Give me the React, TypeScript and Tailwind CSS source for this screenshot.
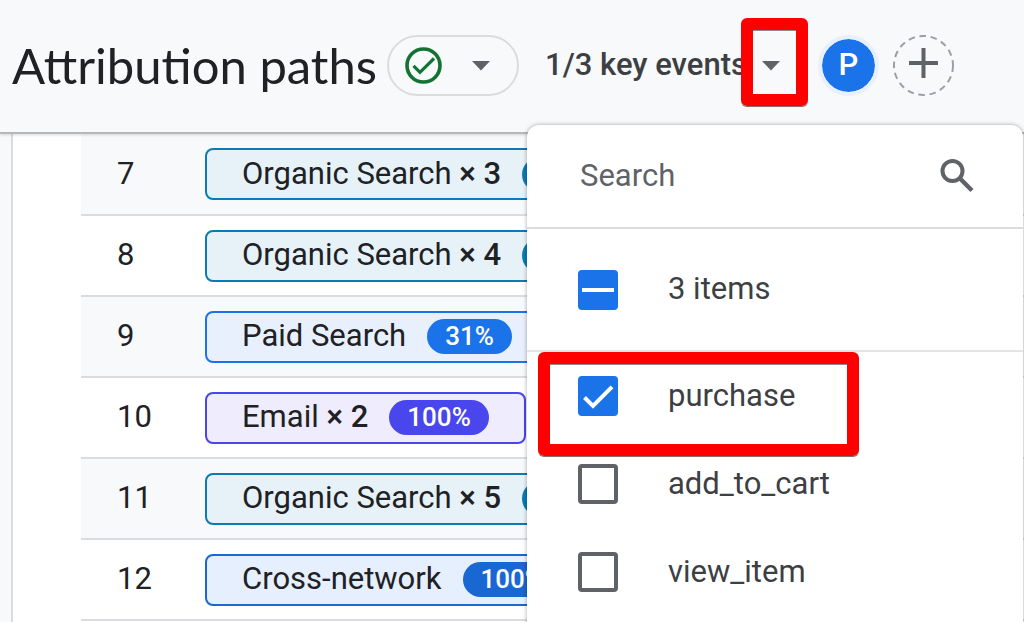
import { useEffect, useRef, useState } from "react";

type PathRow = {
  id: number;
  channel: string;
  count?: number;
  credit: string;
  chip: string;
  pill: string;
};

const ORGANIC_CHIP = "border-[#0b7ab5] bg-[#e6f1f8]";
const ORGANIC_PILL = "bg-[#0b7ab5]";

const rows: PathRow[] = [
  { id: 7, channel: "Organic Search", count: 3, credit: "100%", chip: ORGANIC_CHIP, pill: ORGANIC_PILL },
  { id: 8, channel: "Organic Search", count: 4, credit: "100%", chip: ORGANIC_CHIP, pill: ORGANIC_PILL },
  { id: 9, channel: "Paid Search", credit: "31%", chip: "border-[#1a73e8] bg-[#e8f0fe]", pill: "bg-[#1a73e8]" },
  { id: 10, channel: "Email", count: 2, credit: "100%", chip: "border-[#4846ec] bg-[#eeecfd]", pill: "bg-[#4846ec]" },
  { id: 11, channel: "Organic Search", count: 5, credit: "100%", chip: ORGANIC_CHIP, pill: ORGANIC_PILL },
  { id: 12, channel: "Cross-network", credit: "100%", chip: "border-[#1967d2] bg-[#e6effe]", pill: "bg-[#1967d2]" },
];

const events = ["purchase", "add_to_cart", "view_item"];

function Arrow() {
  return (
    <svg className="h-[10px] w-5 shrink-0" viewBox="0 0 20 10" fill="#5f6368">
      <path d="M1 0h18l-9 9.500z" />
    </svg>
  );
}

function Highlight({ className }: { className: string }) {
  return (
    <span
      className={`pointer-events-none absolute z-20 rounded-md border-12 border-[#ff0000] shadow-[0_1px_0_#8a6a6a,inset_0_1px_0_#8a8a8a] ${className}`}
    />
  );
}

type CheckProps = {
  label: string;
  checked: boolean;
  mixed?: boolean;
  onChange: () => void;
};

function CheckRow({ label, checked, mixed = false, onChange }: CheckProps) {
  const ref = useRef<HTMLInputElement>(null);

  useEffect(() => {
    if (ref.current) ref.current.indeterminate = mixed;
  }, [mixed]);

  const filled = checked || mixed;

  return (
    <label className="flex h-22 w-full cursor-pointer items-center gap-[50px] px-[51px] text-[#3c4043]">
      <span className="grid size-10 shrink-0">
        <input
          ref={ref}
          type="checkbox"
          checked={checked}
          onChange={onChange}
          className={
            filled
              ? "col-start-1 row-start-1 size-10 appearance-none rounded bg-[#1a73e8]"
              : "col-start-1 row-start-1 size-10 appearance-none rounded border-4 border-[#5f6368] bg-white"
          }
        />
        {filled && (
          <svg
            className="pointer-events-none col-start-1 row-start-1 size-10"
            viewBox="0 0 40 40"
            fill="none"
            stroke="#fff"
            strokeWidth="4"
          >
            {mixed ? <path d="M4 20h32" /> : <path d="M6.500 21.500l8.500 8.500L34 10.800" />}
          </svg>
        )}
      </span>
      <span>{label}</span>
    </label>
  );
}

export default function App() {
  const [selected, setSelected] = useState<string[]>(["purchase"]);
  const [query, setQuery] = useState("");
  const [open, setOpen] = useState(true);

  const toggle = (name: string) => {
    setSelected((prev) => (prev.includes(name) ? prev.filter((n) => n !== name) : [...prev, name]));
  };

  const all = selected.length === events.length;

  return (
    <div className="flex h-screen flex-col overflow-hidden bg-[#f8f9fb] font-['Roboto',sans-serif] text-[31px] text-[#202124]">
      {/* Report header */}
      <header className="relative z-10 flex h-[134px] shrink-0 items-center border-b-2 border-[#b6b7b9] bg-[#f8f9fb] pb-px pl-3 whitespace-nowrap shadow-[0_1px_3px_rgba(0,0,0,0.15)]">
        <h1 className="w-94 shrink-0 font-['Lato',sans-serif] text-[49px]">Attribution paths</h1>
        <button
          type="button"
          aria-label="Data quality"
          className="-ml-px flex h-[61px] w-[132px] shrink-0 items-center justify-between rounded-full border-2 border-[#dadce0] pr-[26px] pl-4"
        >
          <svg className="size-[37px]" viewBox="0 0 37 37" fill="none" stroke="#137333" strokeWidth="3.600">
            <circle cx="18.500" cy="18.500" r="16.500" />
            <path d="M8.500 18.800l6.500 6.500L29 11.500" strokeWidth="3.200" />
          </svg>
          <Arrow />
        </button>

        {/* Key event picker */}
        <div className="relative ml-[26px] shrink-0">
          <button
            type="button"
            aria-expanded={open}
            onClick={() => setOpen(!open)}
            className="flex h-[61px] w-59 items-center justify-between font-medium text-[#3c4043]"
          >
            <span>{selected.length}/3 key events</span>
            <Arrow />
          </button>
          <Highlight className="-top-[17px] -right-[27px] h-22 w-[67px]" />

          {open && (
            <div className="absolute top-[90px] -left-[18px] w-124 rounded-t-xl bg-white pb-10 shadow-[0_0_4px_rgba(0,0,0,0.35)]">
              <div className="flex h-[104px] items-center border-b-2 border-[#dadce0] pr-12 pl-[53px]">
                <input
                  type="text"
                  aria-label="Search"
                  placeholder="Search"
                  value={query}
                  onChange={(e) => setQuery(e.target.value)}
                  className="min-w-0 flex-1 text-[#3c4043] outline-none placeholder:text-[#5f6368]"
                />
                <svg className="size-9" viewBox="0 0 36 36" fill="none" stroke="#5f6368" strokeWidth="4">
                  <circle cx="13.500" cy="13" r="10" />
                  <path d="M20.500 20l12.500 12.500" strokeWidth="4.500" />
                </svg>
              </div>
              <div className="flex h-[123px] items-center border-b-2 border-[#e3e4e6]">
                <CheckRow
                  label="3 items"
                  checked={all}
                  mixed={selected.length > 0 && !all}
                  onChange={() => setSelected(all ? [] : events)}
                />
              </div>
              <div className="relative">
                {events
                  .filter((name) => name.includes(query))
                  .map((name) => (
                    <CheckRow key={name} label={name} checked={selected.includes(name)} onChange={() => toggle(name)} />
                  ))}
                <Highlight className="top-0 left-[11px] h-26 w-[321px]" />
              </div>
            </div>
          )}
        </div>

        <button
          type="button"
          aria-label="Property users"
          className="ml-[37px] flex size-[61px] shrink-0 items-center justify-center rounded-full border-4 border-[#e8f0fe] bg-[#1a73e8] bg-clip-padding font-medium text-white"
        >
          P
        </button>
        <button type="button" aria-label="Add comparison" className="ml-[14px] shrink-0">
          <svg className="size-[61px]" viewBox="0 0 61 61" fill="none">
            <circle cx="30.500" cy="30.500" r="29.500" stroke="#9aa0a6" strokeWidth="2" strokeDasharray="6.500 4.730" />
            <path d="M30.500 13v30M16 28h29" stroke="#5f6368" strokeWidth="4" />
          </svg>
        </button>
      </header>

      {/* Paths table */}
      <main className="ml-[11px] min-h-0 flex-1 overflow-hidden border-l-2 border-[#dadce0] bg-white pl-17">
        <table className="w-full border-collapse">
          <tbody>
            {rows.map((row) => (
              <tr key={row.id} className="h-[81px] border-b-2 border-[#dadce0] odd:bg-[#f8f9fb]">
                <td className="w-31 p-0 pl-9">{row.id}</td>
                <td className="p-0">
                  <div
                    className={`flex h-[52px] w-fit items-center gap-[21px] rounded-lg border-2 px-[35px] whitespace-nowrap ${row.chip}`}
                  >
                    <span>
                      {row.channel}
                      {row.count && <span className="font-medium"> × {row.count}</span>}
                    </span>
                    <span
                      className={`flex h-[35px] items-center rounded-full px-[18px] text-[26px] font-medium text-white ${row.pill}`}
                    >
                      {row.credit}
                    </span>
                  </div>
                </td>
              </tr>
            ))}
          </tbody>
        </table>
      </main>
    </div>
  );
}
